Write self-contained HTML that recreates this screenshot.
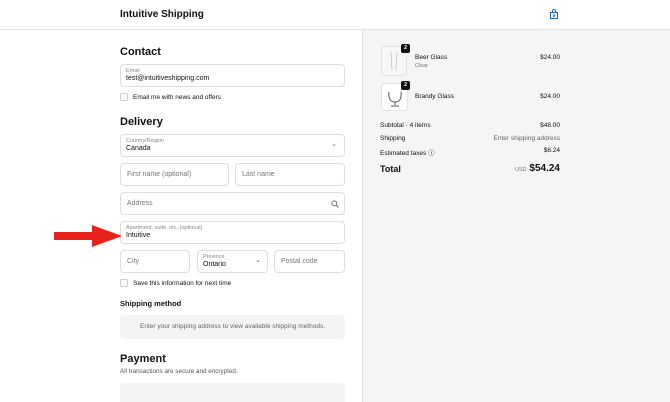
<!DOCTYPE html>
<html style="width:670px;height:402px;overflow:hidden"><head><meta charset="utf-8"><style>
*{box-sizing:border-box;margin:0;padding:0}
body{width:670px;height:402px;overflow:hidden;background:#fff;font-family:"Liberation Sans",Arial,sans-serif;color:#111;position:relative}
.a{position:absolute}
.hdr{left:0;top:0;width:670px;height:30px;border-bottom:1px solid #e6e6e6}
.right{left:362px;top:30px;width:308px;height:372px;background:#f5f5f5;border-left:1px solid #e3e3e3}
.f{position:absolute;border:1px solid #dedede;border-radius:4px;background:#fff;height:23px}
.ph{position:absolute;left:6px;top:7px;font-size:7px;color:#777}
.lb{position:absolute;left:5px;top:3px;font-size:5.5px;color:#888}
.vl{position:absolute;left:5px;top:10px;font-size:7px;color:#111}
.h{font-size:11px;font-weight:bold}
.cb{position:absolute;width:8px;height:8px;border:1px solid #ccc;border-radius:2px;background:#fff}
.s{font-size:6.5px}
.r{position:absolute;font-size:6.5px;right:110px;text-align:right}
</style></head><body>
<div class="a hdr"></div>
<div class="a" style="left:120px;top:9px;font-size:10px;font-weight:bold">Intuitive Shipping</div>
<svg class="a" style="left:549px;top:9px" width="10" height="11" viewBox="0 0 10 11"><path d="M1.5 3.5h7v6h-7z M3.5 3.5v-1.5a1.5 1.5 0 0 1 3 0v1.5 M5 5v2.5 M4 6.6l1 1 1-1" fill="none" stroke="#2563c9" stroke-width="1"/></svg>
<div class="a right"></div>

<div class="a h" style="left:120px;top:46px">Contact</div>
<div class="f" style="left:120px;top:64px;width:225px"><span class="lb">Email</span><span class="vl">test@intuitiveshipping.com</span></div>
<div class="cb" style="left:120px;top:93px"></div>
<div class="a s" style="left:133px;top:94px">Email me with news and offers</div>
<div class="a h" style="left:120px;top:116px">Delivery</div>
<div class="f" style="left:120px;top:134px;width:225px"><span class="lb">Country/Region</span><span class="vl">Canada</span><span class="a" style="right:7px;top:5px;font-size:7px;color:#666">⌄</span></div>
<div class="f" style="left:120px;top:163px;width:109px"><span class="ph">First name (optional)</span></div>
<div class="f" style="left:235px;top:163px;width:110px"><span class="ph">Last name</span></div>
<div class="f" style="left:120px;top:192px;width:225px"><span class="ph">Address</span>
<svg class="a" style="right:5px;top:7px" width="8" height="8" viewBox="0 0 8 8"><circle cx="3.3" cy="3.3" r="2.5" fill="none" stroke="#666" stroke-width=".9"/><path d="M5.2 5.2L7.5 7.5" stroke="#666" stroke-width=".9"/></svg></div>
<div class="f" style="left:120px;top:221px;width:225px"><span class="lb">Apartment, suite, etc. (optional)</span><span class="vl">Intuitive</span></div>
<svg class="a" style="left:54px;top:225px" width="68" height="22" viewBox="0 0 68 22"><path d="M0 7h38V0l30 11-30 11v-7H0z" fill="#e8221b"/></svg>
<div class="f" style="left:120px;top:250px;width:70px"><span class="ph">City</span></div>
<div class="f" style="left:197px;top:250px;width:71px"><span class="lb">Province</span><span class="vl">Ontario</span><span class="a" style="right:6px;top:5px;font-size:7px;color:#666">⌄</span></div>
<div class="f" style="left:274px;top:250px;width:71px"><span class="ph">Postal code</span></div>
<div class="cb" style="left:120px;top:279px"></div>
<div class="a s" style="left:133px;top:280px">Save this information for next time</div>
<div class="a" style="left:120px;top:299px;font-size:7.5px;font-weight:bold">Shipping method</div>
<div class="a" style="left:120px;top:315px;width:225px;height:24px;background:#f4f4f4;border-radius:4px;font-size:6.5px;color:#666;text-align:center;line-height:24px">Enter your shipping address to view available shipping methods.</div>
<div class="a h" style="left:120px;top:353px">Payment</div>
<div class="a" style="left:120px;top:368px;font-size:6.3px;color:#555">All transactions are secure and encrypted.</div>
<div class="a" style="left:120px;top:383px;width:225px;height:19px;background:#f4f4f4;border-radius:4px 4px 0 0"></div>

<div class="a" style="left:381px;top:46px;width:26px;height:30px;background:#f7f7f7;border:1px solid #e3e3e3;border-radius:4px"></div>
<svg class="a" style="left:386px;top:50px" width="16" height="24" viewBox="0 0 16 24"><path d="M5 2l1 18 M11 2l-1 18" stroke="#bbb" stroke-width=".7" fill="none"/></svg>
<div class="a" style="left:401px;top:44px;width:9px;height:9px;background:#111;border-radius:2px;color:#fff;font-size:5.5px;font-weight:bold;text-align:center;line-height:9px">2</div>
<div class="a s" style="left:415px;top:54px">Beer Glass</div>
<div class="a" style="left:415px;top:63px;font-size:5.5px;color:#777">Clear</div>
<div class="r" style="top:54px">$24.00</div>
<div class="a" style="left:381px;top:83px;width:27px;height:28px;background:#fff;border:1px solid #e3e3e3;border-radius:4px"></div>
<svg class="a" style="left:385px;top:88px" width="20" height="20" viewBox="0 0 20 20"><path d="M4 4c-1 7 2 10 6 10s7-3 6-10 M10 14v3 M6 18h8" fill="none" stroke="#555" stroke-width="1"/></svg>
<div class="a" style="left:401px;top:81px;width:9px;height:9px;background:#111;border-radius:2px;color:#fff;font-size:5.5px;font-weight:bold;text-align:center;line-height:9px">2</div>
<div class="a s" style="left:415px;top:93px">Brandy Glass</div>
<div class="r" style="top:93px">$24.00</div>
<div class="a s" style="left:380px;top:122px">Subtotal · 4 items</div><div class="r" style="top:122px">$48.00</div>
<div class="a s" style="left:380px;top:135px">Shipping</div><div class="r" style="top:135px;color:#666">Enter shipping address</div>
<div class="a s" style="left:380px;top:147px">Estimated taxes ⓘ</div><div class="r" style="top:147px">$6.24</div>
<div class="a" style="left:380px;top:164px;font-size:9px;font-weight:bold">Total</div>
<div class="a" style="right:110px;top:163px;font-size:10px;font-weight:bold"><span style="font-size:5.5px;color:#777;font-weight:normal">USD</span> $54.24</div>
</body></html>
